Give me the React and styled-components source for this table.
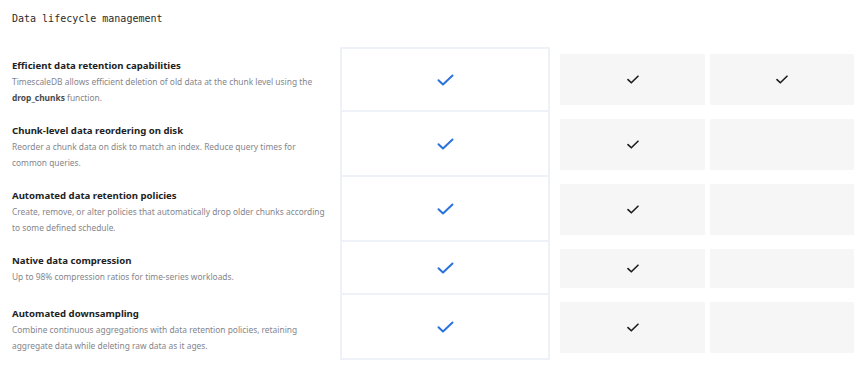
import React from 'react';
import styled, { createGlobalStyle } from 'styled-components';

const GlobalStyle = createGlobalStyle`
  body {
    margin: 0;
    background: #ffffff;
    font-family: "Noto Sans", "Liberation Sans", sans-serif;
  }
`;

const Page = styled.div`
  width: 868px;
  padding: 12px 14px 0 12px;
  box-sizing: border-box;
`;

const SectionTitle = styled.h2`
  margin: 0 0 21px;
  font-family: "DejaVu Sans Mono", "Liberation Mono", monospace;
  font-size: 10px;
  line-height: 14px;
  font-weight: 400;
  color: #2a2a2a;
`;

const Table = styled.div`
  display: flex;
  flex-direction: column;
`;

const Row = styled.div`
  display: grid;
  grid-template-columns: 328px 210px 155px 149px;
  min-height: 53px;
`;

const Label = styled.div`
  padding: 10px 12px 6px 0;
`;

const FeatureName = styled.div`
  font-size: 9.6px;
  line-height: 17px;
  font-weight: 700;
  color: #222222;
`;

const FeatureText = styled.div`
  font-size: 8.4px;
  line-height: 16px;
  color: #85858c;

  b {
    color: #4a4a4a;
    font-weight: 700;
  }
`;

const FeaturedCell = styled.div`
  display: flex;
  align-items: center;
  justify-content: center;
  border-left: 2px solid #eef1f8;
  border-right: 2px solid #eef1f8;
  border-top: ${p => (p.$first ? '2px solid #eef1f8' : 'none')};
  border-bottom: 2px solid #eef1f8;
  background: #ffffff;
`;

const PlanCell = styled.div`
  display: flex;
  align-items: center;
  justify-content: center;
  margin: 7px 0 7px ${p => p.$gap}px;
  background: #f6f6f6;
`;

const BlueCheck = () => (
  <svg width="17" height="12" viewBox="0 0 17 12" fill="none">
    <path d="M1.5 6.2 L6 10.5 L15.5 1.5" stroke="#2a72dc" strokeWidth="2" strokeLinecap="round" strokeLinejoin="round" />
  </svg>
);

const DarkCheck = () => (
  <svg width="12" height="9" viewBox="0 0 12 9" fill="none">
    <path d="M1 4.6 L4.3 7.8 L11 1.2" stroke="#1b1b1b" strokeWidth="1.6" strokeLinecap="round" strokeLinejoin="round" />
  </svg>
);

const features = [
  {
    name: 'Efficient data retention capabilities',
    text: (
      <>
        TimescaleDB allows efficient deletion of old data at the chunk level using the{' '}
        <b>drop_chunks</b> function.
      </>
    ),
    plans: [true, true],
  },
  {
    name: 'Chunk-level data reordering on disk',
    text: 'Reorder a chunk data on disk to match an index. Reduce query times for common queries.',
    plans: [true, false],
  },
  {
    name: 'Automated data retention policies',
    text: 'Create, remove, or alter policies that automatically drop older chunks according to some defined schedule.',
    plans: [true, false],
  },
  {
    name: 'Native data compression',
    text: 'Up to 98% compression ratios for time-series workloads.',
    plans: [true, false],
  },
  {
    name: 'Automated downsampling',
    text: 'Combine continuous aggregations with data retention policies, retaining aggregate data while deleting raw data as it ages.',
    plans: [true, false],
  },
];

const App = () => (
  <>
    <GlobalStyle />
    <Page>
      <SectionTitle>Data lifecycle management</SectionTitle>
      <Table>
        {features.map((f, i) => (
          <Row key={f.name}>
            <Label>
              <FeatureName>{f.name}</FeatureName>
              <FeatureText>{f.text}</FeatureText>
            </Label>
            <FeaturedCell $first={i === 0}>
              <BlueCheck />
            </FeaturedCell>
            <PlanCell $gap={10}>{f.plans[0] && <DarkCheck />}</PlanCell>
            <PlanCell $gap={5}>{f.plans[1] && <DarkCheck />}</PlanCell>
          </Row>
        ))}
      </Table>
    </Page>
  </>
);

export default App;
